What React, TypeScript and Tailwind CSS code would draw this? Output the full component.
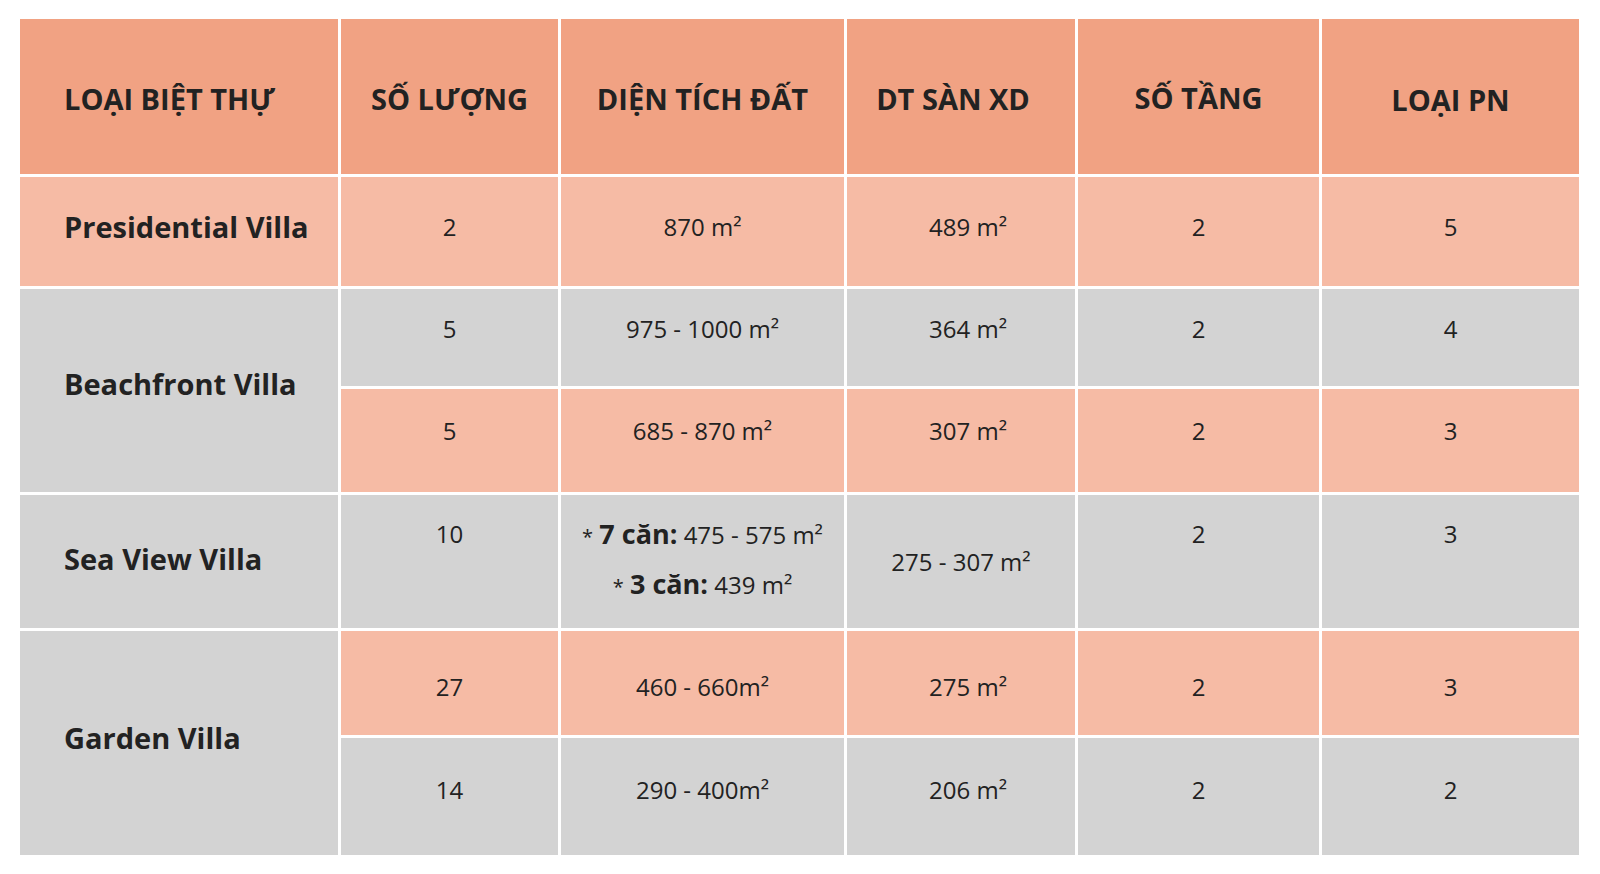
import React from "react";

const HEAD = "bg-[#f1a283]";
const PINK = "bg-[#f6bba5]";
const GRAY = "bg-[#d3d3d3]";

type CellProps = {
	bg: string;
	className?: string;
	children?: React.ReactNode;
};

function Cell({ bg, className = "", children }: CellProps) {
	return <div className={`${bg} flex ${className}`}>{children}</div>;
}

const headers = ["Số lượng", "Diện tích đất", "DT sàn XD", "Số tầng", "Loại PN"];

export default function App() {
	return (
		<div className="min-h-screen bg-white pl-[20px] pt-[19px] font-['Open_Sans',sans-serif] text-[#222222]">
			<div className="grid w-[1559px] grid-cols-[318px_217px_283px_228px_241px_257px] grid-rows-[155px_109px_97px_103px_133px_104px_117px] gap-[3px] bg-white text-[24px] leading-[32px]">
				{/* Header */}
				<Cell bg={HEAD} className="items-center pl-[44px] pt-[4px] text-[29px] font-bold uppercase">
					Loại biệt thự
				</Cell>
				{headers.map((h, i) => (
					<Cell
						key={h}
						bg={HEAD}
						className={`items-center justify-center text-[29px] font-bold uppercase ${i === 4 ? "pt-[7px]" : i === 3 ? "pt-[3px]" : i === 2 ? "pt-[4px] pr-[16px]" : "pt-[4px]"}`}
					>
						{h}
					</Cell>
				))}

				{/* Presidential */}
				<Cell bg={PINK} className="items-center pb-[10px] pl-[44px] text-[29px] font-bold">
					Presidential Villa
				</Cell>
				<Cell bg={PINK} className="items-center justify-center pb-[10px]">2</Cell>
				<Cell bg={PINK} className="items-center justify-center pb-[10px]">870 m²</Cell>
				<Cell bg={PINK} className="items-center justify-center pb-[10px] pl-[14px]">489 m²</Cell>
				<Cell bg={PINK} className="items-center justify-center pb-[10px]">2</Cell>
				<Cell bg={PINK} className="items-center justify-center pb-[10px]">5</Cell>

				{/* Beachfront */}
				<Cell bg={GRAY} className="row-span-2 items-center pb-[14px] pl-[44px] text-[29px] font-bold">
					Beachfront Villa
				</Cell>
				<Cell bg={GRAY} className="items-center justify-center pb-[17px]">5</Cell>
				<Cell bg={GRAY} className="items-center justify-center pb-[17px]">975 - 1000 m²</Cell>
				<Cell bg={GRAY} className="items-center justify-center pb-[17px] pl-[14px]">364 m²</Cell>
				<Cell bg={GRAY} className="items-center justify-center pb-[17px]">2</Cell>
				<Cell bg={GRAY} className="items-center justify-center pb-[17px]">4</Cell>

				<Cell bg={PINK} className="items-center justify-center pb-[20px]">5</Cell>
				<Cell bg={PINK} className="items-center justify-center pb-[20px]">685 - 870 m²</Cell>
				<Cell bg={PINK} className="items-center justify-center pb-[20px] pl-[14px]">307 m²</Cell>
				<Cell bg={PINK} className="items-center justify-center pb-[20px]">2</Cell>
				<Cell bg={PINK} className="items-center justify-center pb-[20px]">3</Cell>

				{/* Sea View */}
				<Cell bg={GRAY} className="items-center pb-[6px] pl-[44px] text-[29px] font-bold">
					Sea View Villa
				</Cell>
				<Cell bg={GRAY} className="justify-center pt-[23px]">10</Cell>
				<Cell bg={GRAY} className="flex-col items-center pt-[15px] leading-[47px]">
					<span>
						<span className="text-[20px]">*</span> <b className="text-[27px]">7 căn:</b> 475 - 575 m²
					</span>
					<span>
						<span className="text-[20px]">*</span> <b className="text-[27px]">3 căn:</b> 439 m²
					</span>
				</Cell>
				<Cell bg={GRAY} className="items-center justify-center">275 - 307 m²</Cell>
				<Cell bg={GRAY} className="justify-center pt-[23px]">2</Cell>
				<Cell bg={GRAY} className="justify-center pt-[23px]">3</Cell>

				{/* Garden */}
				<Cell bg={GRAY} className="row-span-2 items-center pb-[10px] pl-[44px] text-[29px] font-bold">
					Garden Villa
				</Cell>
				<Cell bg={PINK} className="items-center justify-center pt-[8px]">27</Cell>
				<Cell bg={PINK} className="items-center justify-center pt-[8px]">460 - 660m²</Cell>
				<Cell bg={PINK} className="items-center justify-center pt-[8px] pl-[14px]">275 m²</Cell>
				<Cell bg={PINK} className="items-center justify-center pt-[8px]">2</Cell>
				<Cell bg={PINK} className="items-center justify-center pt-[8px]">3</Cell>

				<Cell bg={GRAY} className="items-center justify-center pb-[14px]">14</Cell>
				<Cell bg={GRAY} className="items-center justify-center pb-[14px]">290 - 400m²</Cell>
				<Cell bg={GRAY} className="items-center justify-center pb-[14px] pl-[14px]">206 m²</Cell>
				<Cell bg={GRAY} className="items-center justify-center pb-[14px]">2</Cell>
				<Cell bg={GRAY} className="items-center justify-center pb-[14px]">2</Cell>
			</div>
		</div>
	);
}
